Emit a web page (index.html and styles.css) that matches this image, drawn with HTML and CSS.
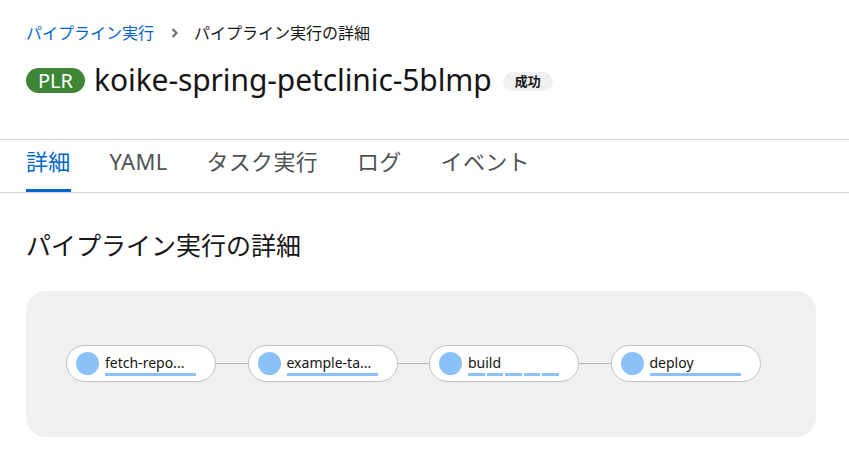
FILE: index.html
```html
<!DOCTYPE html>
<html lang="ja">
<head>
<meta charset="utf-8">
<link rel="stylesheet" href="styles.css">
</head>
<body>
<div class="page-header">
  <nav class="breadcrumb">
    <a class="crumb-link">パイプライン実行</a>
    <svg class="crumb-sep" width="8" height="10" viewBox="0 0 8 10"><path d="M1.5 1 L5.5 5 L1.5 9" fill="none" stroke="#6a6e73" stroke-width="2.2"/></svg>
    <span class="crumb-current">パイプライン実行の詳細</span>
  </nav>
  <div class="title-row">
    <span class="plr-badge">PLR</span>
    <h1 class="title">koike-spring-petclinic-5blmp</h1>
    <span class="status-badge">成功</span>
  </div>
</div>
<div class="tabs">
  <div class="tab active">詳細</div>
  <div class="tab">YAML</div>
  <div class="tab">タスク実行</div>
  <div class="tab">ログ</div>
  <div class="tab">イベント</div>
</div>
<section class="details">
  <h2 class="section-title">パイプライン実行の詳細</h2>
  <div class="topology">
    <div class="node">
      <span class="dot"></span>
      <span class="label"><span class="name">fetch-repo...</span><span class="bar"><i></i></span></span>
    </div>
    <div class="edge"></div>
    <div class="node">
      <span class="dot"></span>
      <span class="label"><span class="name">example-ta...</span><span class="bar"><i></i></span></span>
    </div>
    <div class="edge"></div>
    <div class="node">
      <span class="dot"></span>
      <span class="label"><span class="name">build</span><span class="bar seg"><i></i><i></i><i></i><i></i><i></i></span></span>
    </div>
    <div class="edge"></div>
    <div class="node">
      <span class="dot"></span>
      <span class="label"><span class="name">deploy</span><span class="bar wide"><i></i></span></span>
    </div>
  </div>
</section>
</body>
</html>
```
FILE: styles.css
```css
* { box-sizing: border-box; }
body {
  margin: 0;
  background: #fff;
  color: #151515;
  font-family: "Noto Sans", "Noto Sans CJK JP", sans-serif;
}
.page-header {
  padding: 22px 26px 0;
}
.breadcrumb {
  display: flex;
  align-items: center;
  font-size: 16px;
  line-height: 22px;
  height: 22px;
}
.crumb-link { color: #06c; }
.crumb-sep { margin: 0 15px 0 17px; }
.crumb-current { color: #151515; }
.title-row {
  display: flex;
  align-items: center;
  margin-top: 16px;
  height: 40px;
}
.plr-badge {
  background: #3e8635;
  color: #fff;
  font-size: 20px;
  line-height: 25px;
  height: 25px;
  padding: 0 12px;
  border-radius: 13px;
  margin-right: 9px;
}
.title {
  margin: 0;
  font-size: 30px;
  font-weight: 400;
  line-height: 40px;
  letter-spacing: -0.1px;
}
.status-badge {
  margin-left: 11px;
  background: #f0f0f0;
  font-size: 13px;
  font-weight: 700;
  line-height: 19px;
  padding: 0 12px;
  border-radius: 10px;
  margin-top: 2px;
}
.tabs {
  margin-top: 39px;
  border-top: 1px solid #d2d2d2;
  border-bottom: 1px solid #d2d2d2;
  display: flex;
  gap: 39px;
  padding: 0 26px;
  height: 54px;
}
.tab {
  font-size: 22px;
  line-height: 30px;
  padding-top: 6px;
  color: #4f5255;
  border-bottom: 3px solid transparent;
  height: 52px;
  letter-spacing: 0.3px;
}
.tab.active {
  color: #06c;
  border-bottom-color: #06c;
}
.details {
  padding: 0 33px 0 26px;
}
.section-title {
  margin: 35px 0 0;
  font-size: 25px;
  font-weight: 400;
  line-height: 34px;
}
.topology {
  margin-top: 29px;
  background: #f0f0f0;
  border-radius: 20px;
  height: 146px;
  display: flex;
  align-items: center;
  padding: 0 0 1px 40px;
}
.node {
  width: 150px;
  height: 37px;
  border: 1px solid #c1c1c1;
  border-radius: 19px;
  background: #fff;
  display: flex;
  align-items: center;
  padding-left: 9px;
}
.dot {
  width: 23px;
  height: 23px;
  border-radius: 50%;
  background: #8bc1f7;
  flex: none;
}
.label {
  margin-left: 6px;
  display: flex;
  flex-direction: column;
  padding-top: 2px;
}
.name {
  font-size: 14px;
  line-height: 18px;
  color: #151515;
}
.bar {
  display: flex;
  gap: 2px;
  margin-top: 1px;
  width: 91px;
}
.bar i {
  flex: 1;
  height: 3px;
  background: #8bc1f7;
}
.bar.wide { width: 91px; }
.edge {
  width: 31.5px;
  height: 1px;
  background: #b8b8b8;
}
```
